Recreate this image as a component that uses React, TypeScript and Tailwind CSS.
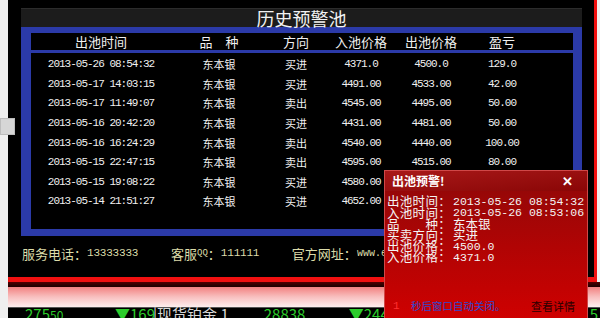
import React from 'react';

const cjk = "font-['Noto_Sans_CJK_SC','Noto_Sans',sans-serif]";
const mono = "font-['Liberation_Mono','Noto_Sans_CJK_SC',monospace]";

const rows = [
  ['2013-05-26 08:54:32', '东本银', '买进', '4371.0', '4500.0', '129.0'],
  ['2013-05-17 14:03:15', '东本银', '买进', '4491.00', '4533.00', '42.00'],
  ['2013-05-17 11:49:07', '东本银', '卖出', '4545.00', '4495.00', '50.00'],
  ['2013-05-16 20:42:20', '东本银', '买进', '4431.00', '4481.00', '50.00'],
  ['2013-05-16 16:24:29', '东本银', '卖出', '4540.00', '4440.00', '100.00'],
  ['2013-05-15 22:47:15', '东本银', '卖出', '4595.00', '4515.00', '80.00'],
  ['2013-05-15 19:08:22', '东本银', '买进', '4580.00', '4630.00', '50.00'],
  ['2013-05-14 21:51:27', '东本银', '买进', '4652.00', '4602.00', '50.00'],
];

const cols = 'grid grid-cols-[140px_96px_58px_72px_68px_74px]';

function AlertPopup() {
  const lines: [string, string, boolean][] = [
    ['出池时间：', '2013-05-26 08:54:32', true],
    ['入池时间：', '2013-05-26 08:53:06', true],
    ['品　　种：', '东本银', false],
    ['买卖方向：', '买进', false],
    ['出池价格：', '4500.0', true],
    ['入池价格：', '4371.0', true],
  ];
  return (
    <div className="absolute left-[384px] top-[170px] w-[204px] h-[152px] flex flex-col border border-[#d04848] bg-gradient-to-b from-[#8e0808] via-[#b00404] to-[#d00000] z-20">
      <div className="h-[20px] flex items-center justify-between pl-[7px] pr-[14px] bg-gradient-to-br from-[#a81818] to-[#8a0606]">
        <span className={`${cjk} text-[12px] font-bold text-white`}>出池预警!</span>
        <span className="text-white text-[13px] font-bold leading-none">✕</span>
      </div>
      <div className="pt-[5px] pl-[2px] text-[#f4f4f4]">
        {lines.map(([label, value, isMono]) => (
          <div key={label} className="flex items-center h-[11.2px]">
            <span className={`${cjk} text-[12.5px] leading-none w-[66px] whitespace-pre tracking-[0.3px]`}>{label}</span>
            <span className={`${isMono ? mono + ' text-[11.5px]' : cjk + ' text-[12.5px]'} leading-none`}>{value}</span>
          </div>
        ))}
      </div>
      <div className="mt-auto mb-[7px] flex items-center pl-[8px] pr-[12px] text-[11px]">
        <span className={`${mono} text-[#ff3030] w-[18px]`}>1</span>
        <span className={`${cjk} text-[#3048d0] text-[10.5px]`}>秒后窗口自动关闭。</span>
        <span className={`${cjk} ml-auto text-[#2a0000]`}>查看详情</span>
      </div>
    </div>
  );
}

export default function App() {
  return (
    <div className="relative w-[600px] h-[318px] overflow-hidden flex bg-[#efefef]">
      <div className="w-[8px] shrink-0">
        <div className="relative z-10 mt-[118px] h-[17px] w-[15px] bg-[#d6d6d6] border border-[#bdbdbd]" />
      </div>

      <div className="flex-1 flex flex-col">
        <div className="flex">
          <div className="w-[589px] h-[282px] bg-black border-r-[3px] border-b-[5px] border-[#f01010] pt-[8px] pl-[13px]">
            <div className="w-[561px]">
              <div className={`${cjk} h-[19px] bg-[#1c1c1c] border-t border-[#2c2c2c] flex items-center justify-center text-[18px] text-[#f2f2f2] leading-none`}>
                历史预警池
              </div>
              <div className="bg-[#2b3aa8] pt-[6px] pl-[10px] pr-[9px] pb-[7px]">
                <div className={`${cols} ${cjk} h-[17px] items-center bg-black text-[13px] text-[#f0f0f0] text-center leading-none`}>
                  <span>出池时间</span>
                  <span className="whitespace-pre">品　种</span>
                  <span>方向</span>
                  <span>入池价格</span>
                  <span>出池价格</span>
                  <span>盈亏</span>
                </div>
                <div className="h-[3px]" />
                <div className="h-[176px] bg-black pt-[2px]">
                  {rows.map((r) => (
                    <div key={r[0]} className={`${cols} h-[19.6px] items-center text-center text-[#f0f0f0] leading-none`}>
                      <span className={`${mono} text-[11px] tracking-[-1px]`}>{r[0]}</span>
                      <span className={`${cjk} text-[11px]`}>{r[1]}</span>
                      <span className={`${cjk} text-[11px]`}>{r[2]}</span>
                      <span className={`${mono} text-[11px] tracking-[-1px]`}>{r[3]}</span>
                      <span className={`${mono} text-[11px] tracking-[-1px]`}>{r[4]}</span>
                      <span className={`${mono} text-[11px] tracking-[-1px]`}>{r[5]}</span>
                    </div>
                  ))}
                </div>
              </div>
            </div>
            <div className="flex items-center pt-[11px] pl-[1px] text-[#dcdcaa] leading-none">
              <span className={`${cjk} text-[13px]`}>服务电话：</span>
              <span className={`${mono} text-[11px] tracking-[-0.2px] w-[84px]`}>13333333</span>
              <span className={`${cjk} text-[13px]`}>客服</span>
              <span className={`${mono} text-[9px]`}>QQ</span>
              <span className={`${cjk} text-[13px]`}>：</span>
              <span className={`${mono} text-[11px] tracking-[-0.2px] w-[71px]`}>111111</span>
              <span className={`${cjk} text-[13px]`}>官方网址：</span>
              <span className={`${mono} text-[10px]`}>www.example.com</span>
            </div>
          </div>
        </div>
        <div className="h-[5px] bg-gradient-to-b from-[#500000] to-[#1a0000]" />
        <div className="h-[20px] bg-gradient-to-b from-[#f08080] via-[#f8c0c0] to-[#fdeeee]" />
        <div className={`h-[11px] bg-black border-t border-[#555] flex items-start text-[#2ccc2c] text-[15px] leading-[12px] ${cjk}`}>
          <span className="ml-[17px] w-[90px]">275<span className="underline text-[12px]">50</span></span>
          <span className="w-[38px]">▼169</span>
          <span className="text-[#d8d8d8]">|现货铂金 1</span>
          <span className="ml-[35px] w-[85px]">28838</span>
          <span>▼244</span>
          <span className="ml-auto mr-[2px]">5</span>
        </div>
      </div>

      <AlertPopup />
    </div>
  );
}
